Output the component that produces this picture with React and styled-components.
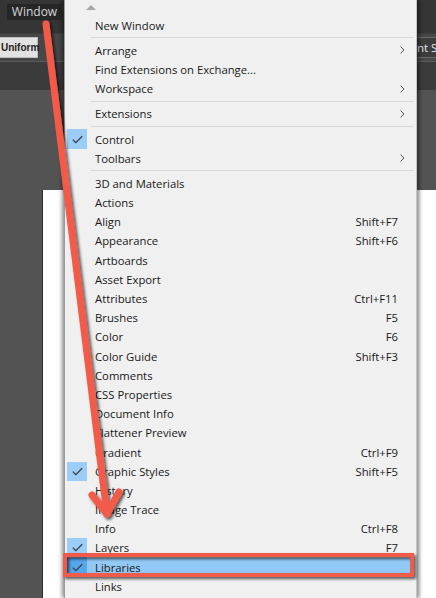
import React from 'react';
import styled, { createGlobalStyle } from 'styled-components';

const GlobalStyle = createGlobalStyle`
  html, body {
    margin: 0;
    padding: 0;
    width: 436px;
    height: 598px;
    overflow: hidden;
    background: #535353;
  }
  * { box-sizing: border-box; }
`;

const SEP = 'sep';

const items = [
  { label: 'New Window' },
  SEP,
  { label: 'Arrange', sub: true },
  { label: 'Find Extensions on Exchange...' },
  { label: 'Workspace', sub: true },
  SEP,
  { label: 'Extensions', sub: true },
  SEP,
  { label: 'Control', checked: true },
  { label: 'Toolbars', sub: true },
  SEP,
  { label: '3D and Materials' },
  { label: 'Actions' },
  { label: 'Align', key: 'Shift+F7' },
  { label: 'Appearance', key: 'Shift+F6' },
  { label: 'Artboards' },
  { label: 'Asset Export' },
  { label: 'Attributes', key: 'Ctrl+F11' },
  { label: 'Brushes', key: 'F5' },
  { label: 'Color', key: 'F6' },
  { label: 'Color Guide', key: 'Shift+F3' },
  { label: 'Comments' },
  { label: 'CSS Properties' },
  { label: 'Document Info' },
  { label: 'Flattener Preview' },
  { label: 'Gradient', key: 'Ctrl+F9' },
  { label: 'Graphic Styles', key: 'Shift+F5', checked: true },
  { label: 'History' },
  { label: 'Image Trace' },
  { label: 'Info', key: 'Ctrl+F8' },
  { label: 'Layers', key: 'F7', checked: true },
  { label: 'Libraries', checked: true, active: true },
  { label: 'Links' },
];

const App = () => {
  return (
    <>
      <GlobalStyle />
      <Workspace>
        <TopBar>
          <MenuLabel>Window</MenuLabel>
        </TopBar>
        <ControlBar>
          <UniformButton>Uniform</UniformButton>
          <DocButton>Document Setup</DocButton>
        </ControlBar>
        <TabStrip />
        <Canvas>
          <Artboard />
        </Canvas>
      </Workspace>

      <Menu>
        <ScrollArrow />
        {items.map((item, i) =>
          item === SEP ? (
            <Separator key={i} />
          ) : (
            <MenuRow key={i} $active={item.active}>
              <CheckBox $checked={item.checked} $active={item.active}>
                {item.checked && (
                  <svg width="11" height="9" viewBox="0 0 11 9">
                    <polyline points="0.8,4.6 3.8,7.6 10.2,1.2" fill="none" stroke="#34404a" strokeWidth="1.3" />
                  </svg>
                )}
              </CheckBox>
              <Label>{item.label}</Label>
              {item.key && <Shortcut>{item.key}</Shortcut>}
              {item.sub && (
                <Chevron>
                  <svg width="5" height="8" viewBox="0 0 5 8">
                    <polyline points="0.6,0.6 4,4 0.6,7.4" fill="none" stroke="#555" strokeWidth="1" />
                  </svg>
                </Chevron>
              )}
            </MenuRow>
          )
        )}
      </Menu>

      <Annotation width="436" height="598" viewBox="0 0 436 598">
        <defs>
          <filter id="shade" x="-20%" y="-20%" width="140%" height="140%">
            <feDropShadow dx="2" dy="2" stdDeviation="1.4" floodColor="#000" floodOpacity="0.65" />
          </filter>
        </defs>
        <g filter="url(#shade)" stroke="#f25a4a" fill="none" strokeLinecap="round" strokeLinejoin="round">
          <line x1="46" y1="24" x2="107" y2="514" strokeWidth="7" />
          <polyline points="92,495 107,514 119,492" strokeWidth="7" />
          <rect x="65" y="555" width="347" height="20" strokeWidth="4" strokeLinejoin="miter" />
        </g>
      </Annotation>
    </>
  );
};

const Workspace = styled.div`
  width: 436px;
  height: 598px;
  display: flex;
  flex-direction: column;
  background: #535353;
  font-family: "Open Sans", "Noto Sans", sans-serif;
`;

const TopBar = styled.div`
  height: 33px;
  background: #353535;
  padding: 4px 0 0 7px;
`;

const MenuLabel = styled.div`
  width: 55px;
  height: 16px;
  background: #262626;
  color: #d6d6d6;
  font-size: 12px;
  line-height: 16px;
  text-align: center;
`;

const ControlBar = styled.div`
  height: 29px;
  background: #474747;
  display: flex;
  align-items: center;
  border-top: 1px solid #3d3d3d;
  border-bottom: 1px solid #5c5c5c;
  overflow: hidden;
`;

const UniformButton = styled.div`
  flex-shrink: 0;
  width: 38px;
  height: 21px;
  padding-left: 1px;
  background: #e2e2e2;
  border: 1px solid #bdbdbd;
  border-left: none;
  color: #1c1c1c;
  font-family: "Liberation Sans", Arial, sans-serif;
  font-size: 10px;
  font-weight: bold;
  line-height: 19px;
  white-space: nowrap;
`;

const DocButton = styled.div`
  flex-shrink: 0;
  margin-left: 328px;
  height: 21px;
  padding: 0 6px;
  background: #3c3c3c;
  border-top: 1px solid #6a6a6a;
  border-bottom: 1px solid #6a6a6a;
  color: #e8e8e8;
  font-size: 11.5px;
  line-height: 19px;
  white-space: nowrap;
`;

const TabStrip = styled.div`
  height: 28px;
  background: #3b3b3b;
`;

const Canvas = styled.div`
  flex: 1;
  padding: 100px 0 0 42px;
  overflow: hidden;
`;

const Artboard = styled.div`
  height: 100%;
  background: #ffffff;
  border-left: 1px solid #2a2a2a;
`;

const Menu = styled.div`
  position: absolute;
  left: 64px;
  top: 0;
  width: 353px;
  height: 598px;
  background: #f0f0f0;
  border-left: 1px solid #9a9a9a;
  border-right: 1px solid #c4c4c4;
  box-shadow: -2px 0 4px rgba(0, 0, 0, 0.45), 3px 0 3px rgba(0, 0, 0, 0.35);
  padding: 15.5px 2px 0 1px;
  font-family: "Open Sans", "Noto Sans", sans-serif;
  font-size: 11.3px;
  color: #181818;
  overflow: hidden;
`;

const ScrollArrow = styled.div`
  position: absolute;
  left: 21px;
  top: 5px;
  width: 0;
  height: 0;
  border-left: 5px solid transparent;
  border-right: 5px solid transparent;
  border-bottom: 5px solid #a8a8a8;
`;

const MenuRow = styled.div`
  height: 19.2px;
  display: flex;
  align-items: center;
  background: ${(p) => (p.$active ? '#92c9f6' : 'transparent')};
  margin-right: 2px;
`;

const CheckBox = styled.div`
  width: 20px;
  height: 19.2px;
  margin-left: 1px;
  display: flex;
  align-items: center;
  justify-content: center;
  background: ${(p) => (p.$active ? '#56a6ea' : p.$checked ? '#9ccdf6' : 'transparent')};
`;

const Label = styled.span`
  margin-left: 8px;
  flex: 1;
  white-space: nowrap;
`;

const Shortcut = styled.span`
  margin-right: 14px;
  white-space: nowrap;
`;

const Chevron = styled.span`
  width: 5px;
  margin-right: 7px;
  display: flex;
  align-items: center;
`;

const Separator = styled.div`
  height: 6px;
  margin-left: 25px;
  display: flex;
  align-items: center;

  &::after {
    content: '';
    flex: 1;
    height: 1px;
    background: #d8d8d8;
  }
`;

const Annotation = styled.svg`
  position: absolute;
  left: 0;
  top: 0;
  pointer-events: none;
  overflow: visible;
`;

export default App;
